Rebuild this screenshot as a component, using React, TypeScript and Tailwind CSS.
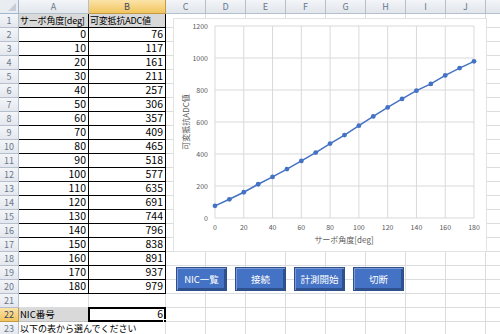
import React from "react";

const data: [number, number][] = [
  [0, 76], [10, 117], [20, 161], [30, 211], [40, 257], [50, 306], [60, 357],
  [70, 409], [80, 465], [90, 518], [100, 577], [110, 635], [120, 691], [130, 744],
  [140, 796], [150, 838], [160, 891], [170, 937], [180, 979],
];

const colLetters = ["A", "B", "C", "D", "E", "F", "G", "H", "I", "J", "K"];
const FONT = { fontFamily: '"Noto Sans CJK JP", "Noto Sans", sans-serif' };

function Chart() {
  const x0 = 42, x1 = 301, yTop = 8, yBot = 200;
  const sx = (v: number) => x0 + (v / 180) * (x1 - x0);
  const sy = (v: number) => yBot - (v / 1200) * (yBot - yTop);
  const yTicks = [0, 200, 400, 600, 800, 1000, 1200];
  const xTicks = [0, 20, 40, 60, 80, 100, 120, 140, 160, 180];
  const pts = data.map(([a, b]) => `${sx(a)},${sy(b)}`).join(" ");
  return (
    <div className="absolute left-[173px] top-[18px] w-[314px] h-[234px] bg-white border border-[#e3e3e3]">
      <svg width="314" height="234" className="absolute -left-px -top-px" style={FONT}>
        {yTicks.map((t) => (
          <line key={"h" + t} x1={x0} x2={x1} y1={sy(t)} y2={sy(t)} stroke="#d9d9d9" strokeWidth="1" />
        ))}
        {xTicks.map((t) => (
          <line key={"v" + t} x1={sx(t)} x2={sx(t)} y1={yTop} y2={yBot} stroke="#d9d9d9" strokeWidth="1" />
        ))}
        {yTicks.map((t) => (
          <text key={"yl" + t} x={35} y={sy(t) + 2.5} fontSize="7" fill="#595959" textAnchor="end">{t}</text>
        ))}
        {xTicks.map((t) => (
          <text key={"xl" + t} x={sx(t)} y={212} fontSize="7" fill="#595959" textAnchor="middle">{t}</text>
        ))}
        <text x={171} y={225} fontSize="8" fill="#595959" textAnchor="middle">サーボ角度[deg]</text>
        <text x={0} y={0} fontSize="8" fill="#595959" textAnchor="middle" transform="translate(16,104) rotate(-90)">可変抵抗ADC値</text>
        <polyline points={pts} fill="none" stroke="#4472c4" strokeWidth="1.5" />
        {data.map(([a, b]) => (
          <circle key={a} cx={sx(a)} cy={sy(b)} r="2.4" fill="#4472c4" />
        ))}
      </svg>
    </div>
  );
}

function Btn({ label }: { label: string }) {
  return (
    <div className="w-[51px] h-[24px] flex items-center justify-center bg-[#4472c4] border border-[#2f4f8a] shadow-[inset_1px_1px_0_#7b9ad6,inset_-2px_-2px_0_#2f528f] text-white text-[9.5px]">
      {label}
    </div>
  );
}

export default function App() {
  const rows = Array.from({ length: 23 }, (_, i) => i + 1);
  const cells: React.ReactNode[] = [];

  cells.push(
    <div key="corner" className="relative bg-[#e9edf2] border-r border-b border-[#9eb6ce]">
      <div className="absolute right-[2px] bottom-[2px] w-0 h-0 border-l-[8px] border-l-transparent border-b-[8px] border-b-[#c6cdd6]" />
    </div>
  );
  colLetters.forEach((c) => {
    const sel = c === "B";
    cells.push(
      <div
        key={"h" + c}
        className={
          sel
            ? "flex items-center justify-center bg-gradient-to-b from-[#fbe3a8] to-[#f2c55c] border-r border-b border-[#c29a45] text-[9px] text-[#3b4a5e]"
            : "flex items-center justify-center bg-gradient-to-b from-[#f3f5f8] to-[#e1e6ec] border-r border-b border-[#b6c0cc] text-[9px] text-[#6a788c]"
        }
      >
        {c === "K" ? "" : c}
      </div>
    );
  });

  rows.forEach((r) => {
    const selRow = r === 22;
    cells.push(
      <div
        key={"r" + r}
        className={
          selRow
            ? "flex items-center justify-center bg-gradient-to-b from-[#fbe3a8] to-[#f2c55c] border-r border-b border-[#c29a45] text-[9px] text-[#3b4a5e]"
            : "flex items-center justify-center bg-gradient-to-b from-[#f3f5f8] to-[#e4e8ee] border-r border-b border-[#b6c0cc] text-[9px] text-[#6a788c]"
        }
      >
        {r}
      </div>
    );
    colLetters.forEach((c) => {
      const key = c + r;
      const inTable = (c === "A" || c === "B") && r <= 20;
      let content: React.ReactNode = null;
      let cls = "relative border-r border-b border-[#dadcdd] bg-white";
      if (inTable) {
        if (r === 1) {
          cls = "relative border-r border-b border-black bg-[#d9d9d9] flex items-center pl-[1px] text-[9px] tracking-[-0.2px] whitespace-nowrap overflow-hidden";
          content = c === "A" ? "サーボ角度[deg]" : "可変抵抗ADC値";
        } else {
          cls = "relative border-r border-b border-black bg-white flex items-center justify-end pr-[2px] text-[10.5px]";
          const d = data[r - 2];
          content = c === "A" ? d[0] : d[1];
        }
      } else if (r === 22 && c === "A") {
        cls = "relative border-r border-b border-[#bfbfbf] bg-[#d9d9d9] flex items-center pl-[1px] text-[9.5px]";
        content = "NIC番号";
      } else if (r === 22 && c === "B") {
        cls = "relative border-r border-b border-[#dadcdd] bg-white flex items-center justify-end pr-[2px] text-[10.5px]";
        content = (
          <>
            6
            <div className="absolute -left-px -top-px -right-px -bottom-px border-2 border-black pointer-events-none" />
            <div className="absolute -right-[3px] -bottom-[3px] w-[5px] h-[5px] bg-black border border-white" />
          </>
        );
      } else if (r === 23 && c === "A") {
        cls = "relative border-b border-[#dadcdd] bg-white flex items-center pl-[1px] text-[9px] whitespace-nowrap overflow-visible z-10";
        content = "以下の表から選んでください";
      } else if (r === 23 && c === "B") {
        cls = "relative border-r border-b border-[#dadcdd] bg-white";
      }
      cells.push(
        <div key={key} className={cls}>
          {content}
        </div>
      );
    });
  });

  return (
    <div className="relative w-[500px] h-[334px] overflow-hidden bg-white text-black" style={FONT}>
      <div className="grid grid-cols-[19px_70px_77px_repeat(9,40px)] auto-rows-[14px] w-[546px] leading-none">
        {cells}
      </div>
      <Chart />
      <div className="absolute left-[176px] top-[267px] flex gap-2">
        <Btn label="NIC一覧" />
        <Btn label="接続" />
        <Btn label="計測開始" />
        <Btn label="切断" />
      </div>
    </div>
  );
}
